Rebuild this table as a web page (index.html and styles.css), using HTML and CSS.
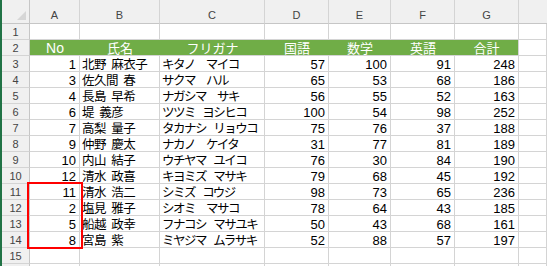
FILE: index.html
```html
<!DOCTYPE html>
<html lang="ja">
<head>
<meta charset="utf-8">
<link rel="stylesheet" href="styles.css">
</head>
<body>
<div class="window">
  <div class="edge"></div>
  <div class="sheet">
    <div class="corner"><span class="tri"></span></div>
    <div class="ch">A</div><div class="ch">B</div><div class="ch">C</div><div class="ch">D</div><div class="ch">E</div><div class="ch">F</div><div class="ch">G</div><div class="ch last"></div>

    <div class="rh">1</div><div class="c"></div><div class="c"></div><div class="c"></div><div class="c"></div><div class="c"></div><div class="c"></div><div class="c"></div><div class="c"></div>

    <div class="rh">2</div><div class="g lat">No</div><div class="g">氏名</div><div class="g">フリガナ</div><div class="g">国語</div><div class="g">数学</div><div class="g">英語</div><div class="g gl">合計</div><div class="c"></div>

    <div class="rh">3</div><div class="c n">1</div><div class="c k">北野 麻衣子</div><div class="c f">キタノ　マイコ</div><div class="c n">57</div><div class="c n">100</div><div class="c n">91</div><div class="c n">248</div><div class="c"></div>
    <div class="rh">4</div><div class="c n">3</div><div class="c k">佐久間 春</div><div class="c f">サクマ　ハル</div><div class="c n">65</div><div class="c n">53</div><div class="c n">68</div><div class="c n">186</div><div class="c"></div>
    <div class="rh">5</div><div class="c n">4</div><div class="c k">長島 早希</div><div class="c f">ナガシマ　サキ</div><div class="c n">56</div><div class="c n">55</div><div class="c n">52</div><div class="c n">163</div><div class="c"></div>
    <div class="rh">6</div><div class="c n">6</div><div class="c k">堤 義彦</div><div class="c f">ツツミ ヨシヒコ</div><div class="c n">100</div><div class="c n">54</div><div class="c n">98</div><div class="c n">252</div><div class="c"></div>
    <div class="rh">7</div><div class="c n">7</div><div class="c k">高梨 量子</div><div class="c f">タカナシ リョウコ</div><div class="c n">75</div><div class="c n">76</div><div class="c n">37</div><div class="c n">188</div><div class="c"></div>
    <div class="rh">8</div><div class="c n">9</div><div class="c k">仲野 慶太</div><div class="c f">ナカノ　ケイタ</div><div class="c n">31</div><div class="c n">77</div><div class="c n">81</div><div class="c n">189</div><div class="c"></div>
    <div class="rh">9</div><div class="c n">10</div><div class="c k">内山 結子</div><div class="c f">ウチヤマ ユイコ</div><div class="c n">76</div><div class="c n">30</div><div class="c n">84</div><div class="c n">190</div><div class="c"></div>
    <div class="rh">10</div><div class="c n">12</div><div class="c k">清水 政喜</div><div class="c f">キヨミズ マサキ</div><div class="c n">79</div><div class="c n">68</div><div class="c n">45</div><div class="c n">192</div><div class="c"></div>
    <div class="rh">11</div><div class="c n">11</div><div class="c k">清水 浩二</div><div class="c f">シミズ コウジ</div><div class="c n">98</div><div class="c n">73</div><div class="c n">65</div><div class="c n">236</div><div class="c"></div>
    <div class="rh">12</div><div class="c n">2</div><div class="c k">塩見 雅子</div><div class="c f">シオミ　マサコ</div><div class="c n">78</div><div class="c n">64</div><div class="c n">43</div><div class="c n">185</div><div class="c"></div>
    <div class="rh">13</div><div class="c n">5</div><div class="c k">船越 政幸</div><div class="c f">フナコシ マサユキ</div><div class="c n">50</div><div class="c n">43</div><div class="c n">68</div><div class="c n">161</div><div class="c"></div>
    <div class="rh">14</div><div class="c n">8</div><div class="c k">宮島 紫</div><div class="c f">ミヤジマ ムラサキ</div><div class="c n">52</div><div class="c n">88</div><div class="c n">57</div><div class="c n">197</div><div class="c"></div>

    <div class="rh">15</div><div class="c"></div><div class="c"></div><div class="c"></div><div class="c"></div><div class="c"></div><div class="c"></div><div class="c"></div><div class="c"></div>
    <div class="rh"></div><div class="c"></div><div class="c"></div><div class="c"></div><div class="c"></div><div class="c"></div><div class="c"></div><div class="c"></div><div class="c"></div>

    <div class="mark"></div>
  </div>
</div>
</body>
</html>
```
FILE: styles.css
```css
html, body {
  margin: 0;
  padding: 0;
  background: #ffffff;
}
body {
  width: 547px;
  height: 266px;
  overflow: hidden;
  font-family: "Liberation Sans", "Noto Sans CJK JP", sans-serif;
  color: #000;
}
.window {
  display: flex;
  height: 266px;
  overflow: hidden;
}
.edge {
  width: 2px;
  flex: none;
  background: #217346;
}
.sheet {
  position: relative;
  flex: 1;
  display: grid;
  grid-template-columns: 28px 50px 80px 105px 64px 62px 64px 64px 1fr;
  grid-template-rows: 24px;
  grid-auto-rows: 16px;
}
.sheet > div {
  box-sizing: border-box;
  min-width: 0;
  white-space: nowrap;
}
.corner {
  background: #f0f0f0;
  border-right: 1px solid #c6c6c6;
  border-bottom: 1px solid #c6c6c6;
  display: flex;
  justify-content: flex-end;
  align-items: flex-end;
  padding: 0 3px 3px 0;
}
.tri {
  width: 0;
  height: 0;
  border-left: 9px solid transparent;
  border-bottom: 9px solid #d6d6d6;
}
.ch {
  background: #f0f0f0;
  border-right: 1px solid #d4d4d4;
  border-bottom: 1px solid #c6c6c6;
  display: flex;
  justify-content: center;
  align-items: flex-end;
  padding-bottom: 2px;
  font-size: 11px;
  line-height: 11px;
  color: #444;
}
.ch.last {
  border-right: none;
}
.rh {
  background: #f0f0f0;
  border-right: 1px solid #c6c6c6;
  border-bottom: 1px solid #d4d4d4;
  display: flex;
  justify-content: center;
  align-items: flex-end;
  padding-bottom: 1px;
  font-size: 11px;
  line-height: 11px;
  color: #444;
}
.c {
  border-right: 1px solid #d4d4d4;
  border-bottom: 1px solid #d4d4d4;
  display: flex;
  align-items: flex-end;
}
.n {
  justify-content: flex-end;
  padding-right: 3px;
  font-size: 13px;
  line-height: 13px;
}
.k {
  align-items: center;
  padding-left: 2px;
  font-family: "Noto Sans CJK JP", sans-serif;
  font-size: 12.5px;
  line-height: 14px;
  letter-spacing: -0.5px;
  word-spacing: 3px;
}
.f {
  align-items: center;
  padding-left: 2px;
  font-family: "Noto Sans CJK JP", sans-serif;
  font-size: 12.5px;
  line-height: 14px;
  letter-spacing: -1.5px;
  word-spacing: 6px;
}
.g {
  background: #70ad47;
  border-bottom: 1px solid #d4d4d4;
  color: #ffffff;
  display: flex;
  justify-content: center;
  align-items: center;
  font-family: "Noto Sans CJK JP", sans-serif;
  font-size: 13px;
  line-height: 14px;
}
.g.gl {
  border-right: 1px solid #d4d4d4;
}
.g.lat {
  font-family: "Liberation Sans", sans-serif;
  font-size: 14px;
}
.mark {
  position: absolute;
  left: 25px;
  top: 182px;
  width: 56px;
  height: 67px;
  box-sizing: border-box;
  border: 2px solid #ff0000;
}
```
